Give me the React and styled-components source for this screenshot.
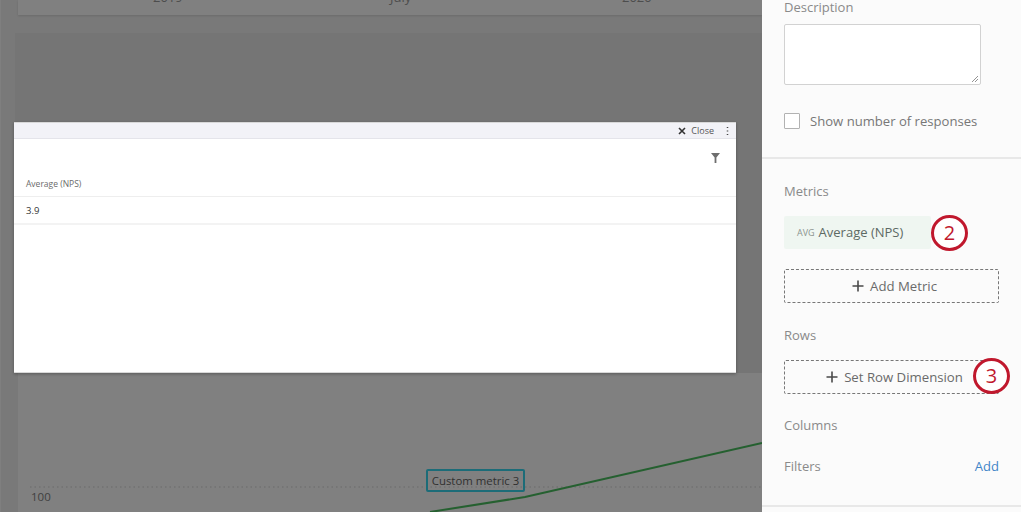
import React from 'react';
import styled, { createGlobalStyle } from 'styled-components';

const Global = createGlobalStyle`
  html, body { margin: 0; padding: 0; height: 512px; overflow: hidden; background: #fff; }
  body { font-family: "Open Sans", "Liberation Sans", sans-serif; }
  * { box-sizing: border-box; }
`;

const Page = styled.div`
  width: 1024px; height: 512px; display: flex; overflow: hidden; position: relative; background: #fff;
`;
const Canvas = styled.main`
  width: 762px; height: 512px; flex: none; background: #797979; position: relative; overflow: hidden;
  display: flex; flex-direction: column; padding-left: 17px; border-left: 1px solid #7f7f7f;
`;
const TopCard = styled.section`
  height: 15px; background: #808080; display: flex; flex: none;
  box-shadow: 0 1px 2px rgba(0,0,0,.12); padding-left: 135px;
  font-size: 13px; color: #4d4d4d; line-height: 1; overflow: hidden;
`;
const AxisLabel = styled.span`
  margin-top: -9px; display: block; height: 13px; width: ${p => p.$w}px; flex: none;
`;
const ChartCard = styled.section`
  margin: 18px 0 0 -3px; flex: 1; position: relative; display: flex; flex-direction: column;
`;
const ChartUpper = styled.div` height: 340px; flex: none; background: #757575; `;
const ChartLower = styled.div` flex: 1; background: #808080; position: relative; margin-left: 3px; `;
const Plot = styled.svg` position: absolute; inset: 0; width: 100%; height: 100%; display: block; `;
const Tick = styled.span`
  position: absolute; left: 13px; bottom: 8px; font-size: 11.5px; color: #3f3f3f; line-height: 14px;
`;
const CalloutTag = styled.div`
  position: absolute; left: 408px; top: 96px; height: 23px; width: 99px; border: 2px solid #1c6c78; border-radius: 2px;
  font-size: 11.4px; line-height: 19px; color: #303030; text-align: center; white-space: nowrap;
`;
const Modal = styled.div`
  position: absolute; left: 14px; top: 122px; width: 722px; height: 251px; background: #fff;
  box-shadow: 0 1px 3px rgba(0,0,0,.3); border: 1px solid #d8d8d8; border-width: 1px 0 1px 0;
  display: flex; flex-direction: column; z-index: 2;
`;
const ModalBar = styled.div`
  height: 16px; flex: none; background: #f2f2f7; border-bottom: 1px solid #e4e4ea;
  display: flex; align-items: center; justify-content: flex-end; gap: 12px; padding-right: 7px;
  font-size: 9px; color: #555;
`;
const CloseAction = styled.span` display: inline-flex; align-items: center; gap: 5px; `;
const ModalTools = styled.div`
  height: 35px; flex: none; display: flex; justify-content: flex-end; align-items: flex-start;
  padding: 14px 16px 0 0;
`;
const HeaderCell = styled.div`
  height: 23px; flex: none; padding: 0 12px; font-size: 8.5px; line-height: 19px; color: #6b6b6b; border-bottom: 1px solid #eee;
`;
const ValueCell = styled.div`
  height: 28px; flex: none; padding: 0 12px; font-size: 9.5px; line-height: 27px; color: #333; border-bottom: 2px solid #f3f3f3;
`;
const Sidebar = styled.aside`
  width: 259px; height: 512px; flex: none; background: #fbfbfb;
  display: flex; flex-direction: column; overflow: hidden;
`;
const Group = styled.div`
  padding: ${p => p.$pad}; border-bottom: ${p => p.$line ? '2px solid #e8e8e8' : 'none'}; flex: none; height: ${p => p.$h}px;
`;
const Label = styled.div`
  font-size: 13px; line-height: 18px; color: #8a8a8a; margin-top: ${p => p.$mt || 0}px;
`;
const TextBox = styled.div`
  width: 197px; height: 61px; margin-top: 8px; background: #fff; border: 1px solid #d2d2d2; border-radius: 2px; position: relative;
  svg { position: absolute; right: 1px; bottom: 1px; }
`;
const CheckRow = styled.div`
  display: flex; align-items: center; gap: 10px; margin-top: 27px; font-size: 13.1px; color: #777; line-height: 18px;
`;
const Box = styled.span`
  width: 16px; height: 16px; background: #fff; border: 1px solid #b2b2b2; border-radius: 1px; flex: none;
`;
const MetricRow = styled.div`
  display: flex; align-items: center; margin-top: 16px; position: relative; height: 33px; width: 147px;
`;
const MetricChip = styled.div`
  width: 147px; height: 33px; background: #eff6f1; border-radius: 2px; display: flex; align-items: center; padding: 0 0 2px 13px; gap: 4px;
  font-size: 13px; color: #5d6a64; white-space: nowrap;
`;
const Agg = styled.span` font-size: 9px; color: #8b948f; padding-top: 2px; `;
const DashedButton = styled.div`
  width: 215px; height: 34px; border: 1px dashed #777; border-radius: 2px; display: flex; align-items: center; justify-content: center; gap: 6px;
  font-size: 13.2px; color: #6a6a6a; margin-top: ${p => p.$mt}px; position: relative; white-space: nowrap; padding-left: 6px;
`;
const Badge = styled.span`
  position: absolute; width: 37px; height: 36px; border: 3px solid #c0182d; border-radius: 50%; background: #fff;
  color: #c0182d; font-size: 20px; font-weight: 500; display: flex; align-items: center; justify-content: center; line-height: 1;
  left: ${p => p.$l}px; top: ${p => p.$t}px;
`;
const FilterRow = styled.div`
  display: flex; justify-content: space-between; margin-top: 23px; width: 215px;
`;
const AddLink = styled.span` font-size: 13px; line-height: 18px; color: #3f85c8; `;

const Plus = () => (
  <svg width="12" height="12" viewBox="0 0 12 12"><path d="M6 .5v11M.5 6h11" stroke="#4a4a4a" strokeWidth="1.6" fill="none" /></svg>
);

export default function App() {
  return (
    <Page>
      <Global />
      <Canvas>
        <TopCard>
          <AxisLabel $w={237}>2019</AxisLabel>
          <AxisLabel $w={232}>July</AxisLabel>
          <AxisLabel $w={40}>2020</AxisLabel>
        </TopCard>
        <ChartCard>
          <ChartUpper />
          <ChartLower>
            <Plot viewBox="0 0 744 139">
              <line x1="12" y1="114" x2="744" y2="114" stroke="#6a6a6a" strokeWidth="1" strokeDasharray="1.5 3" />
              <path d="M412 139 L507 124 L744 70" stroke="#256030" strokeWidth="2" fill="none" />
            </Plot>
            <Tick>100</Tick>
            <CalloutTag>Custom metric 3</CalloutTag>
          </ChartLower>
        </ChartCard>
      </Canvas>
      <Modal>
        <ModalBar>
          <CloseAction>
            <svg width="8" height="8" viewBox="0 0 8 8"><path d="M1 1l6 6M7 1L1 7" stroke="#333" strokeWidth="1.6" /></svg>
            Close
          </CloseAction>
          <svg width="3" height="10" viewBox="0 0 3 10"><path d="M1.5 1v1M1.5 4.5v1M1.5 8v1" stroke="#444" strokeWidth="1.5" /></svg>
        </ModalBar>
        <ModalTools>
          <svg width="9" height="10" viewBox="0 0 9 10"><path d="M0 0h9L5.4 4.5V10H3.6V4.5z" fill="#6e6e6e" /></svg>
        </ModalTools>
        <HeaderCell>Average (NPS)</HeaderCell>
        <ValueCell>3.9</ValueCell>
      </Modal>
      <Sidebar>
        <Group $h={159} $line $pad="0 22px">
          <Label $mt={-2}>Description</Label>
          <TextBox>
            <svg width="8" height="8" viewBox="0 0 8 8"><path d="M1 7l6-6M4 7l3-3" stroke="#777" strokeWidth="0.8" /></svg>
          </TextBox>
          <CheckRow><Box />Show number of responses</CheckRow>
        </Group>
        <Group $h={348} $line $pad="23px 22px 0">
          <Label>Metrics</Label>
          <MetricRow>
            <MetricChip><Agg>AVG</Agg>Average (NPS)</MetricChip>
            <Badge $l={147} $t={-1}>2</Badge>
          </MetricRow>
          <DashedButton $mt={20}><Plus />Add Metric</DashedButton>
          <Label $mt={23}>Rows</Label>
          <DashedButton $mt={16}>
            <Plus />Set Row Dimension
            <Badge $l={188} $t={-3}>3</Badge>
          </DashedButton>
          <Label $mt={22}>Columns</Label>
          <FilterRow><Label>Filters</Label><AddLink>Add</AddLink></FilterRow>
        </Group>
      </Sidebar>
    </Page>
  );
}
